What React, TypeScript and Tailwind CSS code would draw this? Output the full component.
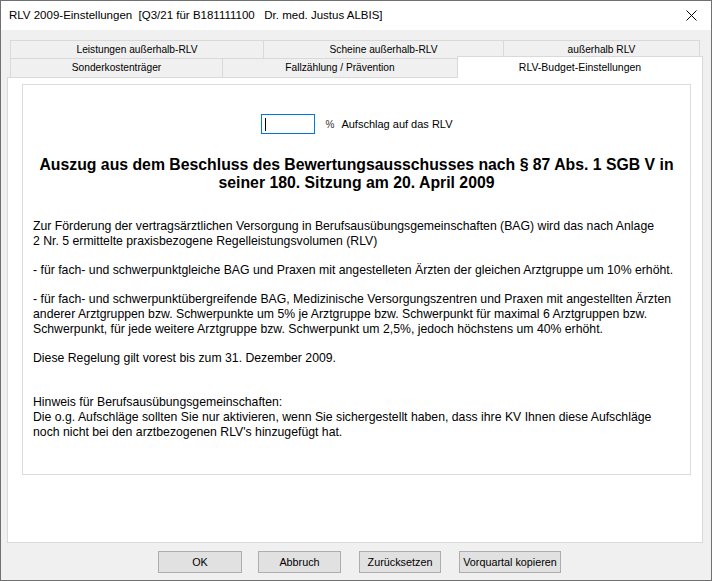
import React from 'react';

const ui = { fontFamily: '"Liberation Sans", Arial, sans-serif' };

const bodyText = [
  'Zur Förderung der vertragsärztlichen Versorgung in Berufsausübungsgemeinschaften (BAG) wird das nach Anlage',
  '2 Nr. 5 ermittelte praxisbezogene Regelleistungsvolumen (RLV)',
  '',
  '- für fach- und schwerpunktgleiche BAG und Praxen mit angestelleten Ärzten der gleichen Arztgruppe um 10% erhöht.',
  '',
  '- für fach- und schwerpunktübergreifende BAG, Medizinische Versorgungszentren und Praxen mit angestellten Ärzten',
  'anderer Arztgruppen bzw. Schwerpunkte um 5% je Arztgruppe bzw. Schwerpunkt für maximal 6 Arztgruppen bzw.',
  'Schwerpunkt, für jede weitere Arztgruppe bzw. Schwerpunkt um 2,5%, jedoch höchstens um 40% erhöht.',
  '',
  'Diese Regelung gilt vorest bis zum 31. Dezember 2009.',
  '',
  '',
  'Hinweis für Berufsausübungsgemeinschaften:',
  'Die o.g. Aufschläge sollten Sie nur aktivieren, wenn Sie sichergestellt haben, dass ihre KV Ihnen diese Aufschläge',
  'noch nicht bei den arztbezogenen RLV\'s hinzugefügt hat.',
];

function Tab({ label, className }: { label: string; className: string }) {
  return (
    <div className={`flex items-center justify-center border-t border-l border-[#d9d9d9] bg-[#f0f0f0] text-[10.2px] text-black whitespace-nowrap ${className}`}>
      {label}
    </div>
  );
}

function Button({ label, width }: { label: string; width: string }) {
  return (
    <button className={`h-[22px] ${width} border border-[#adadad] bg-[#e1e1e1] text-[10.8px] text-black whitespace-nowrap`}>
      {label}
    </button>
  );
}

export default function App() {
  return (
    <div style={ui} className="w-[712px] h-[581px] bg-[#f0f0f0] border border-[#707070] flex flex-col overflow-hidden">
      {/* Title bar */}
      <div className="h-[29px] bg-white flex items-center pl-[8px] pr-[14px] shrink-0">
        <span className="text-[11.5px] text-black whitespace-pre">
          {'RLV 2009-Einstellungen  [Q3/21 für B181111100   Dr. med. Justus ALBIS]'}
        </span>
        <svg className="ml-auto" width="11" height="11" viewBox="0 0 11 11">
          <path d="M0.5 0.5 L10.5 10.5 M10.5 0.5 L0.5 10.5" stroke="#000" strokeWidth="1" />
        </svg>
      </div>

      <div className="pl-[6px] pr-[8px] pt-[10px] flex flex-col">
        {/* Tab rows */}
        <div className="flex pl-[3px] h-[18px]">
          <Tab label="Leistungen außerhalb-RLV" className="w-[253px]" />
          <Tab label="Scheine außerhalb-RLV" className="w-[240px]" />
          <Tab label="außerhalb RLV" className="w-[197px] border-r" />
        </div>
        <div className="flex pl-[3px] h-[19px] items-end">
          <Tab label="Sonderkostenträger" className="w-[212px] h-[19px]" />
          <Tab label="Fallzählung / Prävention" className="w-[235px] h-[19px]" />
          <div className="relative z-10 w-[246px] h-[22px] -mb-[1px] bg-white border-t border-l border-r border-[#d9d9d9] flex items-start justify-center pt-[3px] text-[10.5px] text-black">
            RLV-Budget-Einstellungen
          </div>
        </div>

        {/* Tab panel */}
        <div className="h-[466px] bg-white border border-[#d9d9d9] pl-[14px] pr-[11px] pt-[6px]">
          <div className="h-[391px] border border-[#dcdcdc] flex flex-col items-center">
            <div className="mt-[29px] flex items-center">
              <div className="w-[54px] h-[20px] border border-[#0078d7] bg-white flex items-center pl-[3px]">
                <div className="w-px h-[13px] bg-black" />
              </div>
              <span className="ml-[11px] text-[10px] text-[#333]">%</span>
              <span className="ml-[7px] text-[11px] text-black">Aufschlag auf das RLV</span>
            </div>

            <h1 className="mt-[22px] text-center text-[15.8px] leading-[18px] font-bold text-black whitespace-nowrap">
              Auszug aus dem Beschluss des Bewertungsausschusses nach § 87 Abs. 1 SGB V in
              <br />
              seiner 180. Sitzung am 20. April 2009
            </h1>

            <div className="self-stretch mt-[27px] pl-[10px] text-[12.25px] leading-[14.7px] text-black">
              {bodyText.map((line, i) => (
                <div key={i} className="h-[14.7px] whitespace-nowrap">{line}</div>
              ))}
            </div>
          </div>
        </div>

        {/* Buttons */}
        <div className="flex pl-[151px] mt-[8px] gap-[16px]">
          <Button label="OK" width="w-[84px]" />
          <Button label="Abbruch" width="w-[83px]" />
          <Button label="Zurücksetzen" width="w-[82px] ml-[2px]" />
          <Button label="Vorquartal kopieren" width="w-[102px] ml-[2px]" />
        </div>
      </div>
    </div>
  );
}
